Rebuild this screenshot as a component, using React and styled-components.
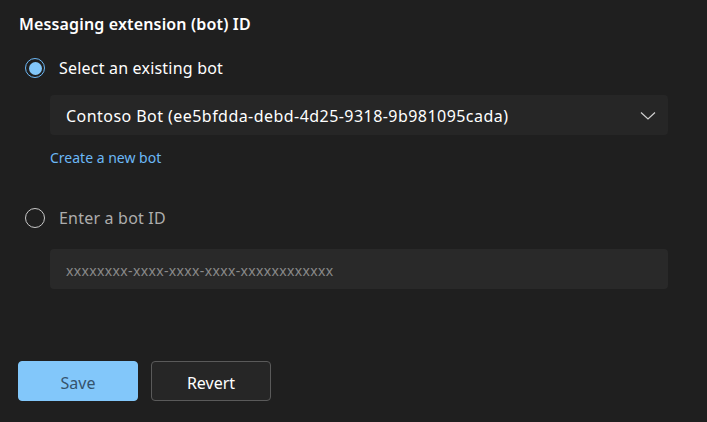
import React, { useState } from 'react';
import styled, { createGlobalStyle } from 'styled-components';

const GlobalStyle = createGlobalStyle`
  html, body {
    margin: 0;
    padding: 0;
    background: #1f1f1f;
  }
  body {
    font-family: "Noto Sans", "Open Sans", sans-serif;
    color: #ffffff;
  }
`;

const Page = styled.div`
  width: 707px;
  height: 422px;
  box-sizing: border-box;
  padding: 12px 0 0 18px;
  display: flex;
  flex-direction: column;
`;

const Heading = styled.h2`
  margin: 0 0 0 1px;
  font-size: 16px;
  font-weight: 600;
  line-height: 24px;
  letter-spacing: 0.15px;
`;

const Option = styled.label`
  display: flex;
  align-items: center;
  gap: 14px;
  margin: ${p => p.$top}px 0 0 7px;
  height: 24px;
  font-size: 16px;
  letter-spacing: 0.2px;
  color: ${p => (p.$checked ? '#ffffff' : '#adadad')};
  cursor: pointer;
`;

const Radio = styled.span`
  width: 20px;
  height: 20px;
  box-sizing: border-box;
  border-radius: 50%;
  border: 1.5px solid ${p => (p.$checked ? '#6cb8f6' : '#c8c8c8')};
  display: flex;
  align-items: center;
  justify-content: center;

  &::after {
    content: '';
    width: 13px;
    height: 13px;
    border-radius: 50%;
    background: #82c7fa;
    display: ${p => (p.$checked ? 'block' : 'none')};
  }
`;

const Field = styled.div`
  margin: ${p => p.$top}px 39px 0 32px;
  height: 40px;
  box-sizing: border-box;
  border-radius: 4px;
  background: ${p => p.$bg};
  display: flex;
  align-items: center;
  padding: 2px 11px 0 16px;
  font-size: ${p => p.$size}px;
  letter-spacing: ${p => p.$spacing}px;
  color: ${p => p.$color};
`;

const FieldText = styled.span`
  flex: 1;
`;

const Link = styled.a`
  margin: 13px 0 0 32px;
  font-size: 14px;
  line-height: 20px;
  color: #6cb8f6;
  text-decoration: none;
  align-self: flex-start;
`;

const Buttons = styled.div`
  display: flex;
  gap: 13px;
  margin-top: 72px;
`;

const Button = styled.button`
  width: 120px;
  height: 40px;
  padding: 3px 0 0;
  border-radius: 4px;
  font-family: inherit;
  font-size: 16px;
  border: 1px solid ${p => (p.$primary ? '#82c7fa' : '#5a5a5a')};
  background: ${p => (p.$primary ? '#82c7fa' : '#262626')};
  color: ${p => (p.$primary ? '#35536c' : '#ffffff')};
`;

const Chevron = () => (
  <svg width="18" height="18" viewBox="0 0 18 18" fill="none">
    <path d="M2 5.5 L9 12 L16 5.5" stroke="#d0d0d0" strokeWidth="1.2" />
  </svg>
);

export default function App() {
  const [mode, setMode] = useState('existing');

  return (
    <Page>
      <GlobalStyle />
      <Heading>Messaging extension (bot) ID</Heading>

      <Option $top={20} $checked={mode === 'existing'} onClick={() => setMode('existing')}>
        <Radio $checked={mode === 'existing'} />
        Select an existing bot
      </Option>
      <Field $top={15} $bg="#262626" $size={16} $spacing={0.45} $color="#ffffff">
        <FieldText>Contoso Bot (ee5bfdda-debd-4d25-9318-9b981095cada)</FieldText>
        <Chevron />
      </Field>
      <Link href="#">Create a new bot</Link>

      <Option $top={38} $checked={mode === 'id'} onClick={() => setMode('id')}>
        <Radio $checked={mode === 'id'} />
        Enter a bot ID
      </Option>
      <Field $top={19} $bg="#292929" $size={14} $spacing={0.35} $color="#8a8a8a">
        <FieldText>xxxxxxxx-xxxx-xxxx-xxxx-xxxxxxxxxxxx</FieldText>
      </Field>

      <Buttons>
        <Button $primary>Save</Button>
        <Button>Revert</Button>
      </Buttons>
    </Page>
  );
}
